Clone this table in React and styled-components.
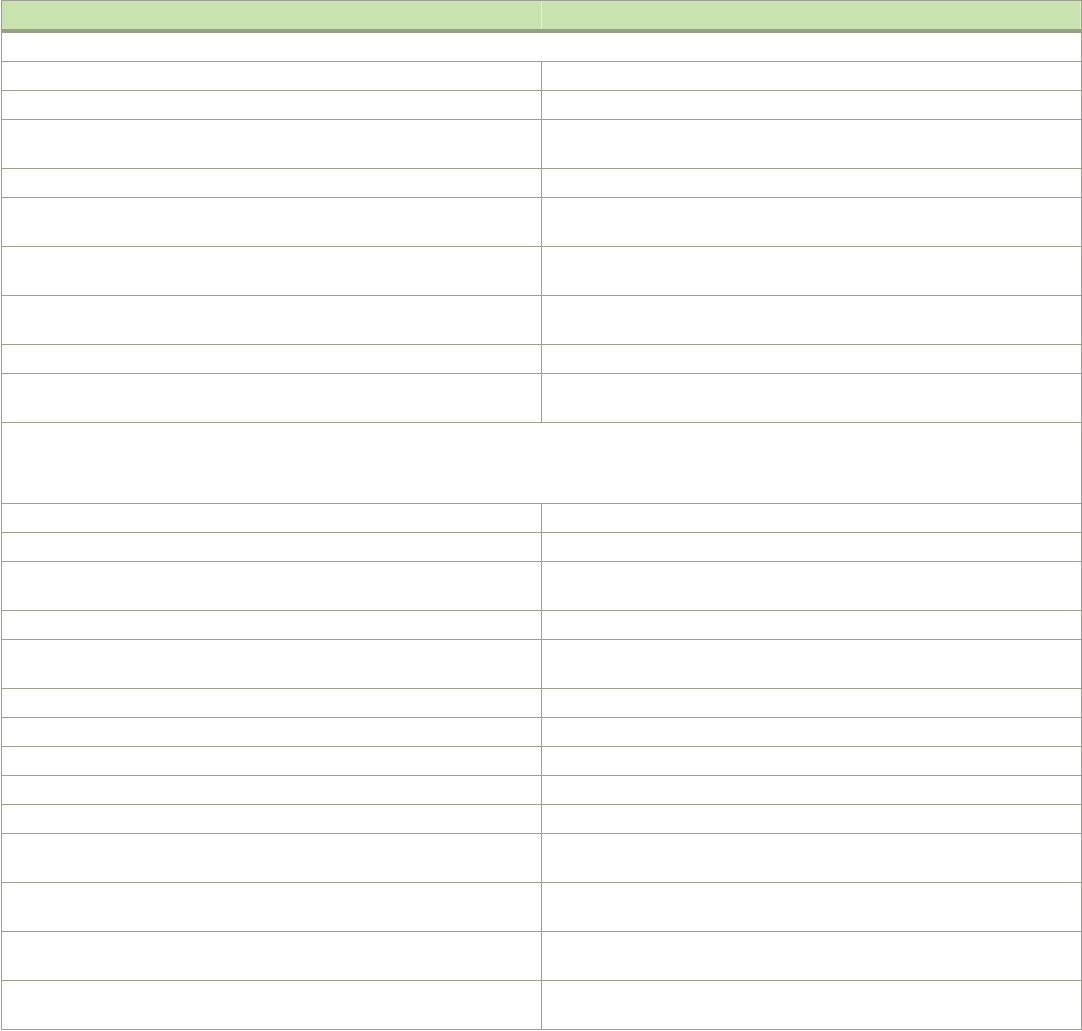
import React from "react";
import styled, { createGlobalStyle } from "styled-components";

const GlobalStyle = createGlobalStyle`
  html, body {
    margin: 0;
    padding: 0;
    background: #fff;
    font-family: "Liberation Sans", Arial, sans-serif;
  }
`;

const LINE = "#9f9f8e";

const Table = styled.div`
  box-sizing: border-box;
  width: 1081px;
  margin-left: 1px;
  border: 1px solid ${LINE};
  border-bottom: 1px solid ${LINE};
`;

const HeadRow = styled.div`
  display: grid;
  grid-template-columns: 539px 540px;
  height: 28px;
  border-bottom: 4px solid #9c9e8b;
  background: #c9e3ae;
`;

const HeadCell = styled.div`
  box-sizing: border-box;
  height: 100%;
  border-left: ${(p) => (p.second ? "1px solid #e3eed6" : "none")};
  border-right: ${(p) => (p.second ? "1px solid #e3eed6" : "none")};
`;

const Row = styled.div`
  display: grid;
  grid-template-columns: ${(p) => (p.span ? "1fr" : "539px 540px")};
  height: ${(p) => p.h}px;
  border-bottom: ${(p) => (p.last ? "none" : `1px solid ${LINE}`)};
`;

const Cell = styled.div`
  box-sizing: border-box;
  border-left: ${(p) => (p.second ? `1px solid ${LINE}` : "none")};
`;

// row content heights, "span" = full-width row
const rows = [
  { h: 28, span: true },
  { h: 28 },
  { h: 28 },
  { h: 48 },
  { h: 28 },
  { h: 48 },
  { h: 48 },
  { h: 48 },
  { h: 28 },
  { h: 48 },
  { h: 80, span: true },
  { h: 28 },
  { h: 28 },
  { h: 48 },
  { h: 28 },
  { h: 48 },
  { h: 28 },
  { h: 28 },
  { h: 28 },
  { h: 28 },
  { h: 28 },
  { h: 48 },
  { h: 48 },
  { h: 48 },
  { h: 48 },
];

export default function App() {
  return (
    <>
      <GlobalStyle />
      <Table>
        <HeadRow>
          <HeadCell />
          <HeadCell second />
        </HeadRow>
        {rows.map((r, i) => (
          <Row key={i} h={r.h} span={r.span} last={i === rows.length - 1}>
            {r.span ? (
              <Cell />
            ) : (
              <>
                <Cell />
                <Cell second />
              </>
            )}
          </Row>
        ))}
      </Table>
    </>
  );
}
